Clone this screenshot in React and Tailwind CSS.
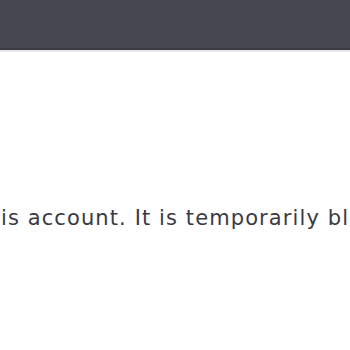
import React from 'react';

const App = () => {
  return (
    <div className="min-h-screen bg-white overflow-hidden" style={{ fontFamily: '"DejaVu Sans", "Noto Sans", sans-serif' }}>
      {/* Header */}
      <header className="h-[50px] bg-[#46464f] border-b-2 border-[#3b3b43]" />
      <div className="h-[2px] bg-[#e6e6ec]" />

      {/* Message */}
      <main className="pt-[152px] overflow-hidden">
        <p className="whitespace-nowrap text-[21px] leading-[28px] text-[#3a3a44] tracking-[1.1px] ml-[1px]">
          is account. It is temporarily blocked. Please try again later.
        </p>
      </main>
    </div>
  );
};

export default App;
